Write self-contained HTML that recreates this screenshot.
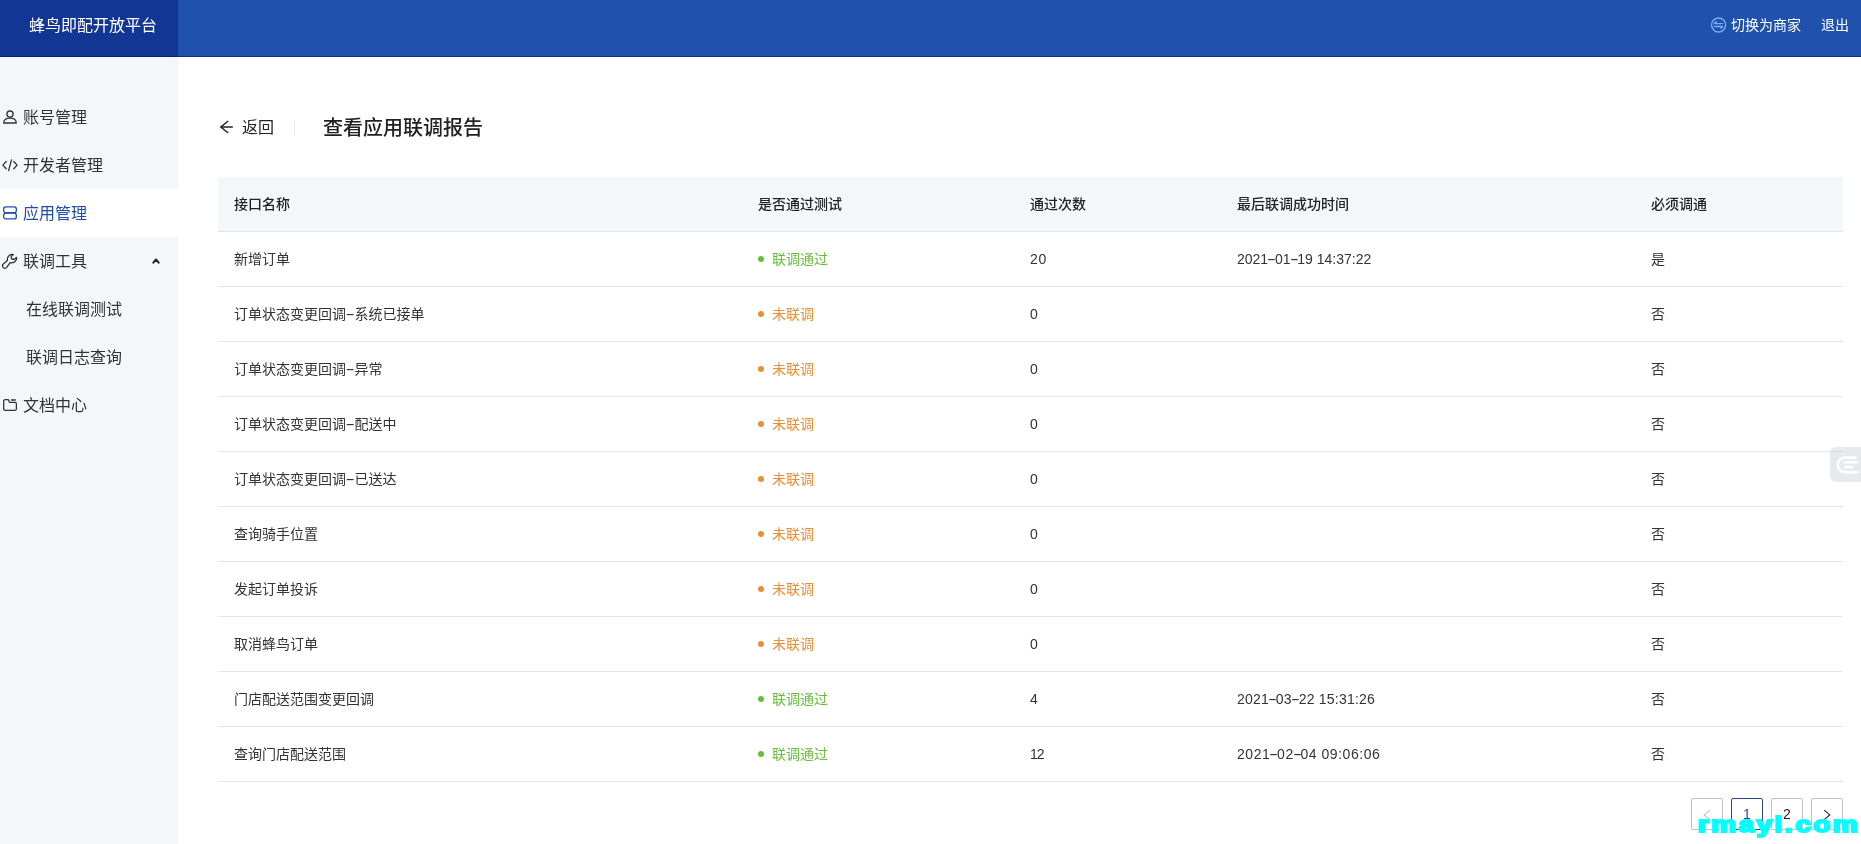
<!DOCTYPE html>
<html lang="zh-CN">
<head>
<meta charset="utf-8">
<title>查看应用联调报告</title>
<style>
*{box-sizing:border-box;margin:0;padding:0}
html,body{width:1861px;height:844px;overflow:hidden;background:#fff}
body{position:relative;font-family:"Liberation Sans","Noto Sans CJK SC",sans-serif;color:#333;-webkit-font-smoothing:antialiased}
.hdr{position:absolute;left:0;top:0;width:1861px;height:57px;background:#1f51ad}
.hline{position:absolute;left:0;top:56px;width:1861px;height:1px;background:rgba(0,5,40,.42)}
.logo{position:absolute;left:0;top:0;width:178px;height:57px;background:#113694;color:#fff;font-size:16px;line-height:56px;text-align:center;letter-spacing:0}
.logo span{position:relative;left:4px;top:-2px}
.hr{position:absolute;top:0;height:56px;line-height:56px;color:#fff;font-size:14px}
.side{position:absolute;left:0;top:57px;width:178px;height:787px;background:#f4f7fa}
.mi{position:absolute;left:0;width:178px;height:48px;line-height:50px;font-size:16px;color:#333;padding-left:23px;white-space:nowrap}
.mi.sub{padding-left:26px}
.mi.act{background:#fff;color:#1f4ea8}
.ico{position:absolute;left:0;top:0;overflow:visible}
.back{position:absolute;left:242px;top:116px;font-size:16px;line-height:24px;color:#222}
.ttl{position:absolute;left:323px;top:114px;font-size:20px;line-height:28px;color:#222;font-weight:500}
.vbar{position:absolute;left:294px;top:121px;width:1px;height:14px;background:#e4e7ec}
.tbl{position:absolute;left:218px;top:177px;width:1625px}
.th{position:relative;height:55px;background:#f4f7fa;border-bottom:1px solid #e2e5e9;font-weight:500;color:#222}
.tr{position:relative;height:55px;border-bottom:1px solid #e2e5e9;color:#333}
.th span,.tr span{position:absolute;top:0;line-height:54px;font-size:14px;white-space:nowrap}
.c1{left:16px}.c2{left:540px}.c3{left:812px}.c4{left:1019px}.c5{left:1433px}
.tr .c3{letter-spacing:.6px}.tr .c4{letter-spacing:0}
.d{font-weight:400;display:inline-block;width:8.5px;text-align:center;transform:scaleX(2);letter-spacing:0}.c4 .d{width:6.8px;transform:scaleX(1.9)}
.ok{color:#69bd3d}.no{color:#e6903a}
.st{padding-left:14px}
.st i{position:absolute;left:0;top:24px;width:6px;height:6px;border-radius:50%;background:currentColor}
.pg{position:absolute;top:798px;width:32px;height:32px;border:1px solid #c2c2c2;border-radius:2px;font-size:14px;line-height:30px;text-align:center;color:#222;background:#fff}
.pg.on{border-color:#2a478a;color:#2a4a96}
.wm{position:absolute;left:1697.5px;top:809px;letter-spacing:2px;font-family:"Liberation Sans",sans-serif;font-weight:700;font-size:22px;line-height:32px;color:#00ffff;-webkit-text-stroke:2px #00ffff;white-space:nowrap;transform-origin:0 0;transform:scaleX(1.268)}
.fb{position:absolute;left:1830px;top:447px;width:31px;height:35px;background:rgba(212,216,223,.55);border-radius:6px 0 0 6px}
</style>
</head>
<body>
<div id="root" style="position:absolute;left:0;top:0;width:1861px;height:844px;will-change:transform">
<div class="hdr"></div>
<div class="logo"><span>蜂鸟即配开放平台</span></div>
<div class="hline"></div>
<div class="hr" style="left:1731px;top:-3px">切换为商家</div>
<div class="hr" style="left:1821px;top:-3px">退出</div>

<div class="side">
  <div class="mi" style="top:36px">账号管理</div>
  <div class="mi" style="top:84px">开发者管理</div>
  <div class="mi act" style="top:132px">应用管理</div>
  <div class="mi" style="top:180px">联调工具</div>
  <div class="mi sub" style="top:228px">在线联调测试</div>
  <div class="mi sub" style="top:276px">联调日志查询</div>
  <div class="mi" style="top:324px">文档中心</div>
</div>

<div class="back">返回</div>
<div class="vbar"></div>
<div class="ttl">查看应用联调报告</div>

<div class="tbl">
  <div class="th"><span class="c1">接口名称</span><span class="c2">是否通过测试</span><span class="c3">通过次数</span><span class="c4">最后联调成功时间</span><span class="c5">必须调通</span></div>
  <div class="tr"><span class="c1">新增订单</span><span class="c2 st ok"><i></i>联调通过</span><span class="c3">20</span><span class="c4">2021<b class="d">-</b>01<b class="d">-</b>19 14:37:22</span><span class="c5">是</span></div>
  <div class="tr"><span class="c1">订单状态变更回调<b class="d">-</b>系统已接单</span><span class="c2 st no"><i></i>未联调</span><span class="c3">0</span><span class="c4"></span><span class="c5">否</span></div>
  <div class="tr"><span class="c1">订单状态变更回调<b class="d">-</b>异常</span><span class="c2 st no"><i></i>未联调</span><span class="c3">0</span><span class="c4"></span><span class="c5">否</span></div>
  <div class="tr"><span class="c1">订单状态变更回调<b class="d">-</b>配送中</span><span class="c2 st no"><i></i>未联调</span><span class="c3">0</span><span class="c4"></span><span class="c5">否</span></div>
  <div class="tr"><span class="c1">订单状态变更回调<b class="d">-</b>已送达</span><span class="c2 st no"><i></i>未联调</span><span class="c3">0</span><span class="c4"></span><span class="c5">否</span></div>
  <div class="tr"><span class="c1">查询骑手位置</span><span class="c2 st no"><i></i>未联调</span><span class="c3">0</span><span class="c4"></span><span class="c5">否</span></div>
  <div class="tr"><span class="c1">发起订单投诉</span><span class="c2 st no"><i></i>未联调</span><span class="c3">0</span><span class="c4"></span><span class="c5">否</span></div>
  <div class="tr"><span class="c1">取消蜂鸟订单</span><span class="c2 st no"><i></i>未联调</span><span class="c3">0</span><span class="c4"></span><span class="c5">否</span></div>
  <div class="tr"><span class="c1">门店配送范围变更回调</span><span class="c2 st ok"><i></i>联调通过</span><span class="c3">4</span><span class="c4" style="letter-spacing:.22px">2021<b class="d">-</b>03<b class="d">-</b>22 15:31:26</span><span class="c5">否</span></div>
  <div class="tr"><span class="c1">查询门店配送范围</span><span class="c2 st ok"><i></i>联调通过</span><span class="c3" style="letter-spacing:-1px">12</span><span class="c4" style="letter-spacing:.53px">2021<b class="d">-</b>02<b class="d">-</b>04 09:06:06</span><span class="c5">否</span></div>
</div>

<div class="pg" style="left:1691px"></div>
<div class="pg on" style="left:1731px">1</div>
<div class="pg" style="left:1771px">2</div>
<div class="pg" style="left:1811px"></div>
<div class="fb"></div>

<svg class="ico" width="1861" height="844" viewBox="0 0 1861 844" fill="none" stroke-linecap="round" stroke-linejoin="round">
  <!-- user -->
  <g stroke="#333" stroke-width="1.3">
    <circle cx="10" cy="114.1" r="3.1"/>
    <path d="M3.7 123 C3.9 119.6 6.6 118.2 10 118.2 C13.4 118.2 16.1 119.6 16.3 123 Z"/>
  </g>
  <!-- code -->
  <g stroke="#333" stroke-width="1.3">
    <path d="M6.2 161.5 L2.9 165.1 L6.2 168.7"/>
    <path d="M11.5 159.8 L8.6 170.6"/>
    <path d="M13.8 161.5 L17.1 165.1 L13.8 168.7"/>
  </g>
  <!-- app -->
  <g stroke="#1f4ea8" stroke-width="1.3">
    <rect x="3.65" y="206.9" width="12.7" height="5.7" rx="2.2"/>
    <rect x="3.65" y="213.2" width="12.7" height="5.7" rx="2.2"/>
  </g>
  <!-- wrench -->
  <path stroke="#333" stroke-width="1.3" d="M13.4 254.6 C12 254.2 10.4 254.4 9.2 255.4 C7.6 256.8 7 258.6 7.5 260.5 L3.3 264 C2.2 265 2.2 266.6 3.2 267.6 C4.2 268.6 5.8 268.5 6.7 267.4 L10.1 262.6 C12.2 263.1 14.2 262.5 15.5 261 C16.5 259.9 16.8 258.6 16.5 257.4 L14.6 258.9 C13.6 259.6 12.3 259.4 11.6 258.5 C10.9 257.6 11 256.4 11.9 255.7 Z"/>
  <!-- caret -->
  <path stroke="#222" stroke-width="2" d="M153.3 262.7 L156 259.5 L158.7 262.7"/>
  <!-- folder -->
  <g stroke="#333" stroke-width="1.3">
    <path d="M5.2 399.65 H8.2 L9.5 402.3 H15 A1.4 1.4 0 0 1 16.4 403.7 V408.9 A1.4 1.4 0 0 1 15 410.3 H5.1 A1.4 1.4 0 0 1 3.7 408.9 V401.1 A1.45 1.45 0 0 1 5.2 399.65 Z"/>
    <path d="M11.4 400 H15.4"/>
  </g>
  <!-- back arrow -->
  <g stroke="#222" stroke-width="1.5" stroke-linecap="butt" stroke-linejoin="miter">
    <path d="M228.2 121 L220.8 127 L228.2 133"/>
    <path d="M221 127 H232.8"/>
  </g>
  <!-- switch -->
  <g stroke="#80aef6" stroke-width="1.35">
    <circle cx="1718.6" cy="25" r="7"/>
    <path d="M1716.2 21.8 L1714.4 23.6 H1722.6"/>
    <path d="M1714.4 26.5 H1722.6 L1720.8 28.3"/>
  </g>
  <!-- pagination arrows -->
  <path stroke="#c4c4c4" stroke-width="1.1" stroke-linecap="butt" stroke-linejoin="miter" d="M1709.8 810.2 L1704.2 814.9 L1709.8 819.6"/>
  <path stroke="#222" stroke-width="1.1" stroke-linecap="butt" stroke-linejoin="miter" d="M1824.2 810.2 L1829.8 814.9 L1824.2 819.6"/>
  <!-- feedback -->
  <g stroke="#fff" stroke-width="2.6">
    <path d="M1855.5 457.6 H1845 A7.3 7.3 0 0 0 1845 472.2 H1857.5"/>
    <path d="M1845 462.3 H1857"/>
    <path d="M1845 467 H1852"/>
  </g>
</svg>
<div class="wm">rmayi.com</div>
</div>
</body>
</html>
